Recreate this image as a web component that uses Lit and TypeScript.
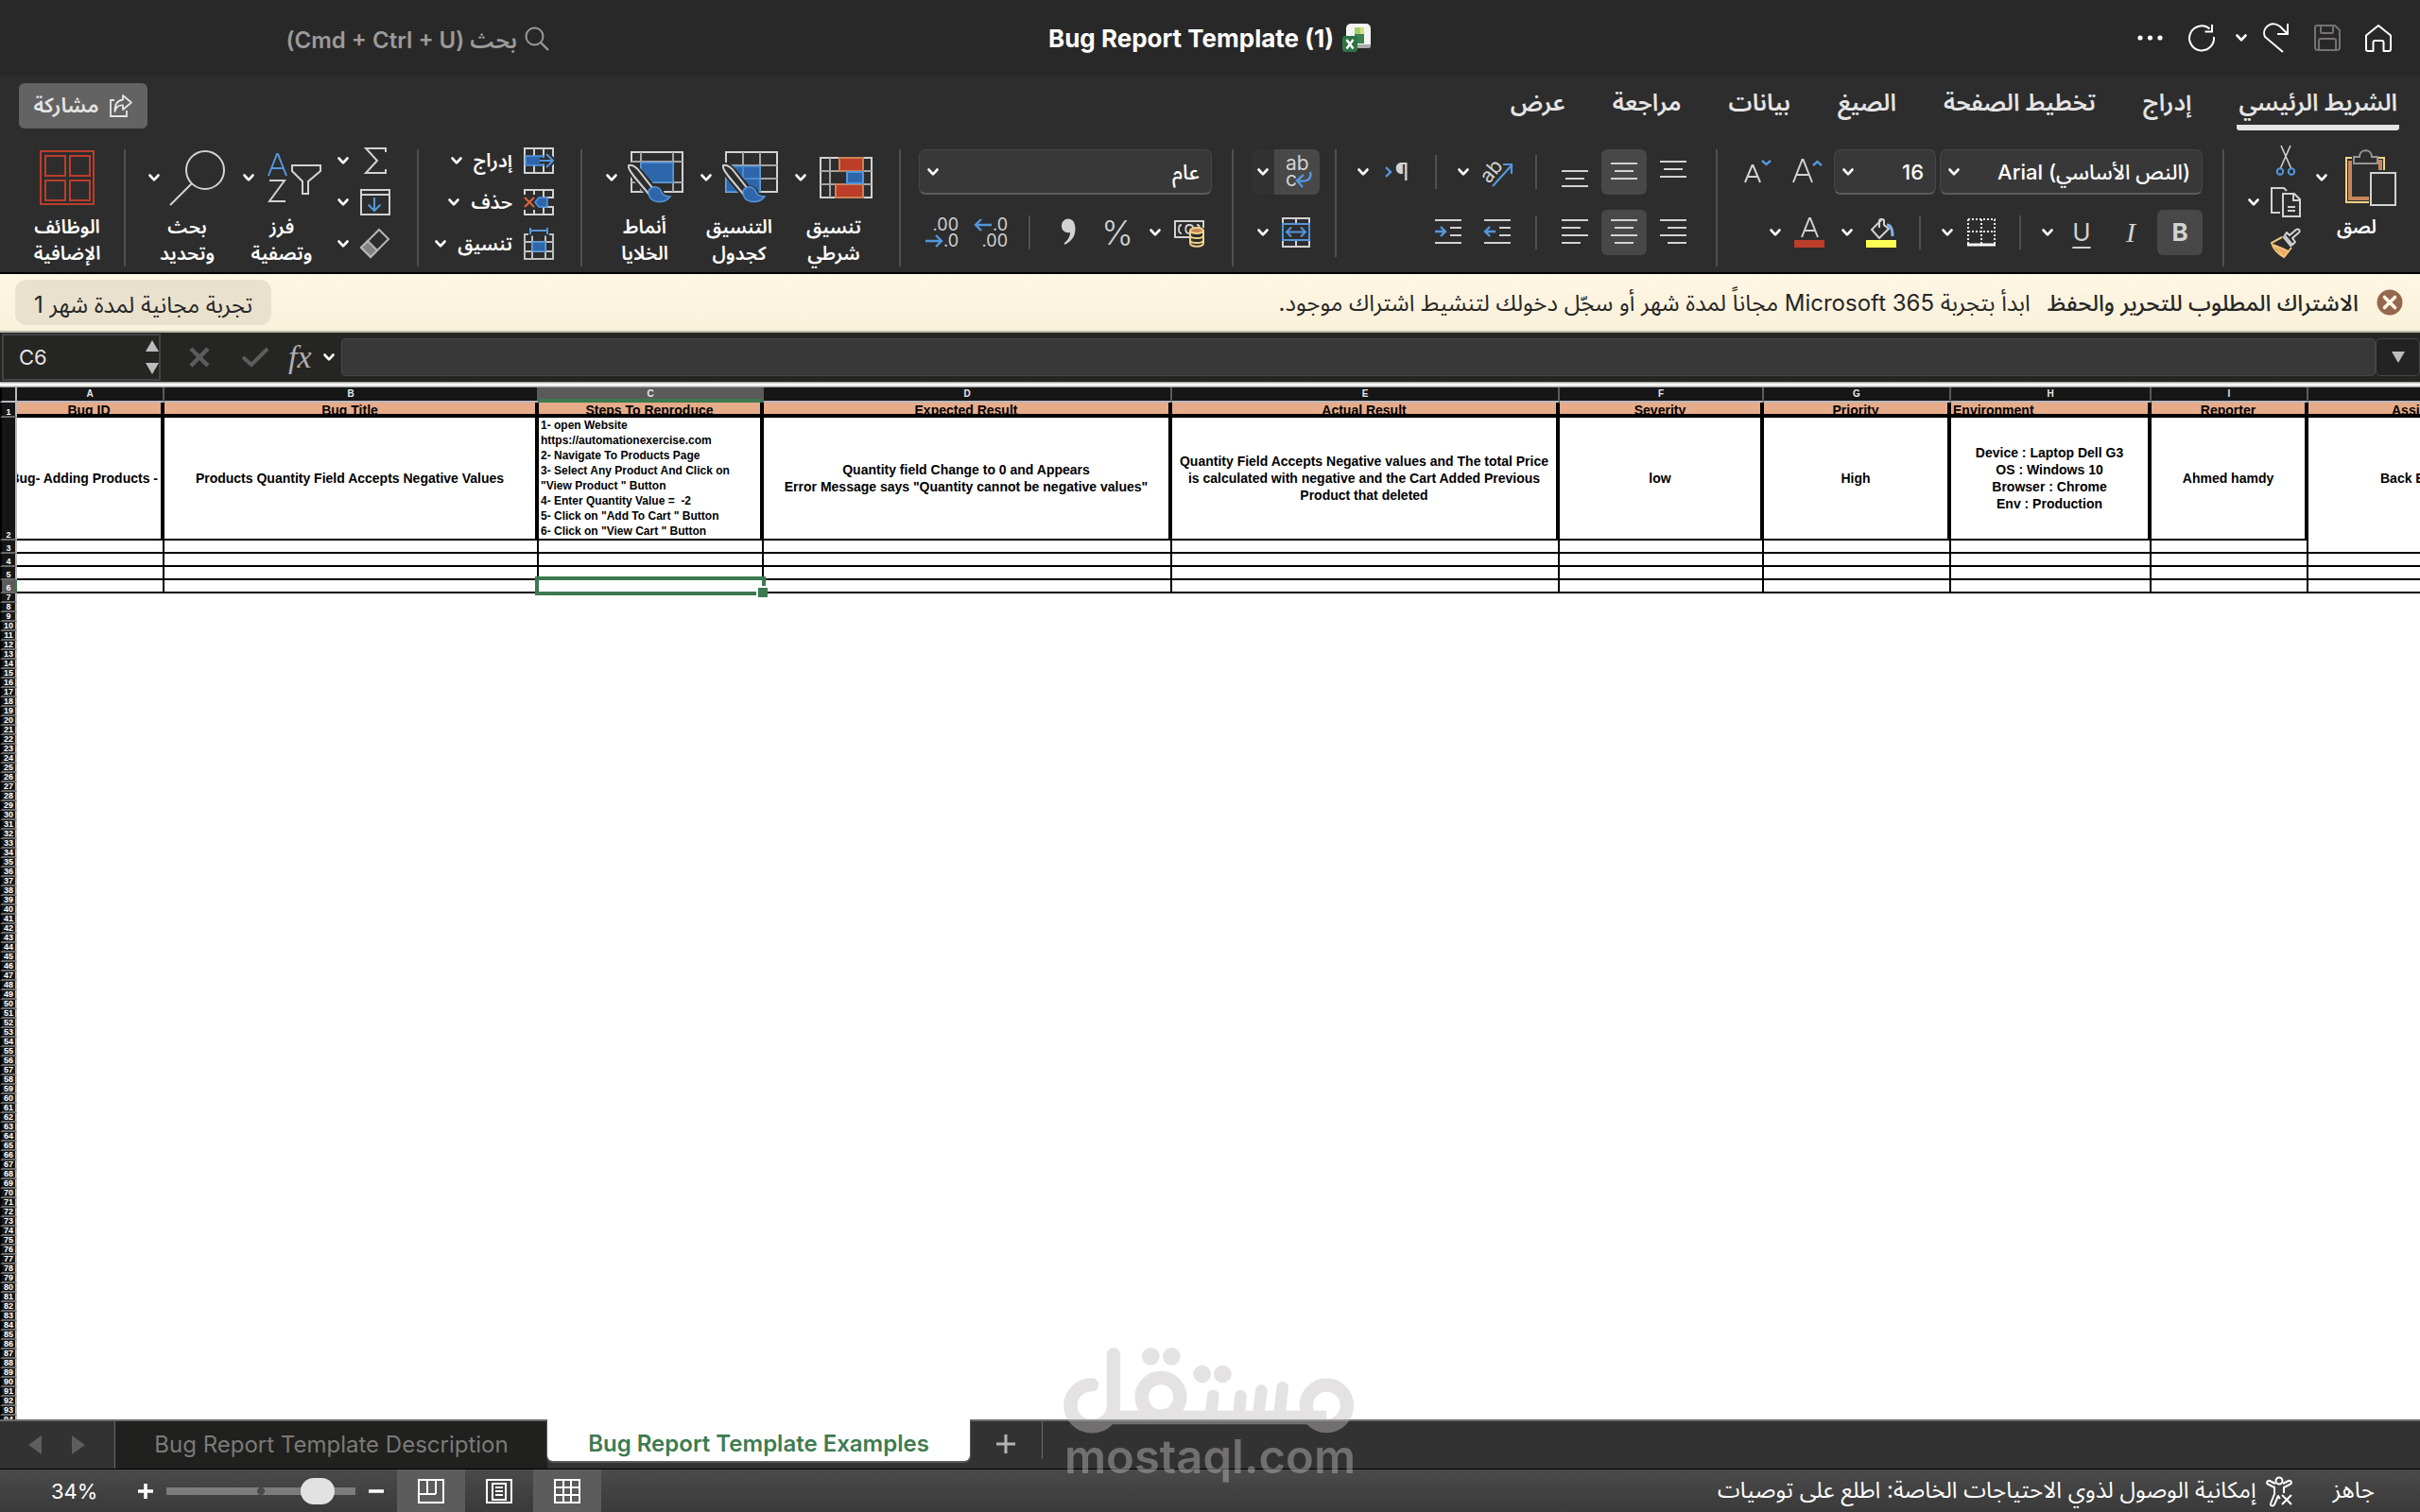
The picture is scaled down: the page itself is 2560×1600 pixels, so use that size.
import { LitElement, html, css, svg, nothing, TemplateResult } from "lit";
import { customElement, state } from "lit/decorators.js";
import { classMap } from "lit/directives/class-map.js";
import { styleMap } from "lit/directives/style-map.js";

const chevron = html`<svg class="chev" viewBox="0 0 12 8" width="12" height="8" aria-hidden="true">
  <path d="M1.5 1.5 6 6.3 10.5 1.5" fill="none" stroke="#fff" stroke-width="2.6" stroke-linecap="round" stroke-linejoin="round" />
</svg>`;

const pic = (w: number, h: number, body: unknown) =>
  html`<svg class="pic" viewBox="0 0 ${w} ${h}" width=${w} height=${h} fill="none" stroke="#d2d2d2" stroke-width="2" aria-hidden="true">${body}</svg>`;

const lines = (rows: number[][]) =>
  pic(32, 32, rows.map(([x1, x2, y]) => svg`<path d="M${x1} ${y}H${x2}" />`));

const icons = {
  home: pic(32, 32, svg`<g stroke="#fff"><path d="M3 13.5 16 3 29 13.5V28a2 2 0 0 1-2 2h-5.500v-9a2 2 0 0 0-2-2h-7a2 2 0 0 0-2 2v9H5a2 2 0 0 1-2-2Z" stroke-linejoin="round" /></g>`),
  save: pic(32, 32, svg`<g stroke="#757170"><path d="M5 3h19l5 5v18a3 3 0 0 1-3 3H6a3 3 0 0 1-3-3V5a2 2 0 0 1 2-2Z M9 3v7a1 1 0 0 0 1 1h11a1 1 0 0 0 1-1V3 M7 29V19a2 2 0 0 1 2-2h14a2 2 0 0 1 2 2v10" /></g>`),
  redo: pic(32, 36, svg`<g stroke="#fff"><path d="M28 3v11H17 M28 14 20 6C10-1 0 8 4 17L23 33" stroke-linejoin="miter" /></g>`),
  refresh: pic(32, 32, svg`<g stroke="#fff"><path d="M24.500 6.500A13 13 0 1 0 29 15 M27 2v7.500h-7.500" /></g>`),
  dots: pic(32, 32, svg`<g fill="#fff" stroke="none"><circle cx="5" cy="16" r="2.600" /><circle cx="15.500" cy="16" r="2.600" /><circle cx="26" cy="16" r="2.600" /></g>`),
  search: pic(26, 28, svg`<g stroke="#9c9a99"><circle cx="10.500" cy="10.500" r="9" /><path d="M17 17 25 25" stroke-width="2.400" /></g>`),
  workbook: pic(32, 32, svg`<g stroke="none"><rect x="5" y="1" width="26" height="26" rx="5" fill="#f4f4f4" /><rect x="5" y="23" width="26" height="4" rx="2" fill="#a9a9a9" />
    <rect x="14" y="5" width="10" height="17" fill="#3e7f50" /><rect x="14" y="5" width="6" height="7" fill="#9fce6a" /><rect x="20" y="5" width="4" height="7" fill="#d8dd7c" />
    <rect x="1" y="14" width="16" height="17" rx="3" fill="#2f7445" /><path d="m5.500 18 7 9.500m0-9.500-7 9.500" stroke="#fff" stroke-width="2.400" /></g>`),
  share: pic(26, 26, svg`<g stroke="#e4e4e4" stroke-width="1.800"><path d="M6 7H2v17h17v-6" /><path d="M15 2 24 9.500 15 17v-4.500C10 12 8 14 6.500 19 6.500 11 9 7 15 6.500Z" stroke-linejoin="round" /></g>`),
  paste: pic(56, 60, svg`<path d="M8 9H2v47h24" stroke="#f2d488" stroke-width="2" /><path d="M6 12v40h20" stroke="#c9855a" stroke-width="4" /><path d="M36 9h6v13" stroke="#f2d488" /><path d="M34 13h4v9" stroke="#c9855a" stroke-width="4" />
    <path d="M10 15V8h6c0-9 13-9 13 0h6v7Z" stroke="#959595" fill="#2d2d2d" /><rect x="28" y="25" width="26" height="34" fill="#2d2d2d" />`),
  cut: pic(32, 32, svg`<path d="M11 0 22 25M21 0 10 25" stroke-width="1.600" /><g stroke="#5496dc"><circle cx="10" cy="27.500" r="3.200" /><circle cx="22" cy="27.500" r="3.200" /></g>`),
  copy: pic(32, 32, svg`<path d="M10 27H1V1h13l3 3" /><path d="M13 7h12l6 6v18H13Z M24 7v7h7 M18 21h8M18 25h8" />`),
  brush: pic(32, 32, svg`<path d="M13 8 22 19 M15 7l8 10 3-3-3-4 7-6a2 2 0 0 0-3-3l-7 6-3-3Z" stroke-linejoin="round" /><path d="M12 9 1 15c2 7 6 11 13 15l8-10" stroke="#f2c878" /><path d="m3 17 10 4 6 3-5 6Z" fill="#f2a56a" stroke="#f2c878" stroke-width="1.500" />`),
  grow: pic(32, 32, svg`<path d="M1 27 10.500 3h1L21 27M5 19h12" /><path d="m22 9 4.500-4L31 9" stroke="#5496dc" stroke-width="2.400" />`),
  shrink: pic(32, 32, svg`<path d="M2 27 9.500 9h1L18 27M5 21h10" /><path d="m20 4 4.500 4L29 4" stroke="#5496dc" stroke-width="2.400" />`),
  borders: pic(32, 32, svg`<path d="M2 2h29M2 2v26M30 2v26M16 2v26M2 15h29" stroke-dasharray="2 2" stroke="#e8e8e8" /><path d="M1 29h30" stroke="#fff" stroke-width="3" />`),
  fill: pic(32, 34, svg`<path d="M17 3 6 14l8 9 10-10-5-4V4a3 3 0 0 0-5 0v8" /><path d="M22 9c4 0 6 3 6 12" stroke="#7cb2e8" stroke-width="3" /><rect x="0" y="25" width="32" height="8" fill="#ffff54" stroke="none" />`),
  fontColor: pic(32, 34, svg`<path d="M8 22 16 2h1l8 20M11 15h11" /><rect x="0" y="25" width="32" height="8" fill="#bb3d2a" stroke="none" />`),
  top: lines([[2, 30, 5], [6, 26, 13], [2, 30, 21]]),
  middle: lines([[2, 30, 7], [6, 26, 15], [2, 30, 23]]),
  bottom: lines([[2, 30, 15], [6, 26, 23], [2, 30, 31]]),
  right: lines([[2, 30, 3], [10, 30, 11], [2, 30, 19], [10, 30, 27]]),
  center: lines([[2, 30, 3], [6, 26, 11], [2, 30, 19], [6, 26, 27]]),
  left: lines([[2, 30, 3], [2, 22, 11], [2, 30, 19], [2, 22, 27]]),
  indentMore: pic(32, 32, svg`<path d="M2 3h28M18 11h12M18 19h12M2 27h28" /><path d="M14 15H3m5-5-5 5 5 5" stroke="#5496dc" stroke-width="2.400" />`),
  indentLess: pic(32, 32, svg`<path d="M2 3h28M18 11h12M18 19h12M2 27h28" /><path d="M2 15h11m-5-5 5 5-5 5" stroke="#5496dc" stroke-width="2.400" />`),
  merge: pic(32, 32, svg`<path d="M1 1h28v30H1ZM15 1v30" /><rect x="1" y="7" width="28" height="17" fill="#2d2d2d" stroke="#5496dc" /><path d="M5 15.500h20m-15-5-5 5 5 5m10-10 5 5-5 5" stroke="#5496dc" />`),
  comma: pic(32, 32, svg`<path d="M9 9a7 7 0 0 1 14-1c2 9-2 17-11 21v-2c4-3 6-7 6-11-5 1-9-2-9-7Z" fill="#d2d2d2" stroke="none" />`),
  currency: pic(32, 30, svg`<path d="M17 20H1V3h30v7" /><path d="M8 7c-4 0-4 9 0 9M16 16c-5 0-5-9 0-9 2 0 4 1 4 3M24 7c2 0 3 1 3 3" stroke-width="1.800" /><path d="M17 13v13c0 5 14 5 14 0V13" fill="#2d2d2d" stroke="#f2d488" /><ellipse cx="24" cy="13" rx="7" ry="3" fill="#c9855a" stroke="#f2d488" /><path d="M17 18c0 4 14 4 14 0M17 23c0 4 14 4 14 0" stroke="#f2d488" />`),
  condFormat: pic(56, 44, svg`<rect x="1" y="1" width="54" height="42" /><path d="M11 1v42M46 1v42M1 15h54M1 29h54" stroke="#a5a5a5" /><rect x="21" y="1" width="25" height="14" fill="#bb3d2a" stroke="#d08052" /><rect x="17" y="29" width="29" height="14" fill="#bb3d2a" stroke="#d08052" /><rect x="29" y="16" width="17" height="12" fill="#2e66ab" stroke="#5496dc" />`),
  sigma: pic(32, 28, svg`<path d="M27 5V1H6l12 13L6 27h21v-4" />`),
  fillDown: pic(32, 28, svg`<path d="M1 1h30v26H1ZM1 6h30" /><path d="M15 9v14m-6.500-6.500L15 23l6.500-6.500" stroke="#5496dc" />`),
  eraser: pic(32, 32, svg`<path d="M20 1 30 11 11 30 1 20Z" stroke="#b6b5b9" /><path d="M8 13 18 23 11 30 1 20Z" fill="#858183" stroke="#b6b5b9" />`),
  sort: pic(56, 56, svg`<path d="M1 26 10 3h1l9 23M4 18h13" stroke="#5496dc" /><path d="M2 31h16L2 53h17" /><path d="M26 15h30v6L43 32v13h-6V32L26 21Z" />`),
  find: pic(60, 60, svg`<circle cx="38" cy="22" r="20" /><path d="M24 36 1 59" />`),
  addins: pic(60, 60, svg`<g stroke="#bb3d2a"><rect x="2" y="2" width="56" height="56" /><rect x="7" y="7" width="21" height="21" /><rect x="33" y="7" width="21" height="21" /><rect x="7" y="33" width="21" height="21" /><rect x="33" y="33" width="21" height="21" /></g>`),
  insert: pic(32, 28, svg`<path d="M1 1h30v26H1ZM11 1v26M21 1v26" /><rect x="2" y="9" width="19" height="10" fill="#2e66ab" stroke="#5496dc" stroke-width="1.500" /><path d="M17 14h14m-7-7 7 7-7 7" stroke="#2d2d2d" stroke-width="6" /><path d="M17 14h14m-7-7 7 7-7 7" stroke="#5496dc" />`),
  remove: pic(32, 28, svg`<path d="M1 6V1h30v8H20M1 22v5h30v-8H20M11 1v5M21 1v8M11 22v5M21 19v8" /><path d="M12 14l4-5h9v10h-9Z" fill="#2e66ab" stroke="#5496dc" stroke-width="1.500" /><path d="m1 9 10 10M11 9 1 19" stroke="#e0643a" />`),
  format: pic(32, 34, svg`<path d="M1 7h30v26H1ZM9 7v26M23 7v26M1 15h30M1 25h30" stroke="#c0c0c0" /><rect x="9" y="15" width="14" height="10" fill="#2e66ab" stroke="#5496dc" stroke-width="1.500" /><path d="M5 5h22" stroke="#2d2d2d" stroke-width="7" /><path d="M7 0v7M25 0v7M7 3h18" stroke="#5496dc" />`),
  access: pic(32, 32, svg`<g stroke="#fff" stroke-linejoin="round"><circle cx="15" cy="5" r="3.500" /><path d="M11 8 5 5c-3-1-4 3-1 4l6 3v7L6 29c-1 3 3 3 4 1l4-9 2 3M19 8l6-3c3-1 4 3 1 4l-6 3v6" /><path d="m18 20 10 10M28 20 18 30" /></g>`),
};

const stylePaint = svg`<path d="M2 15c4-1 8 2 12 7l14 17c6 0 9 4 10 9l8 2c-8 6-22 7-24-6L8 27C4 22 1 18 2 15Z" fill="#2d2d2d" stroke="#2d2d2d" stroke-width="6" />
  <path d="M2 15c4-1 9 3 12 7l14 18-5 5L8 27C4 22 1 18 2 15Z" fill="#2d2d2d" stroke-width="2" />
  <path d="M23 44c0-6 7-8 12-4 3 3 1 8 11 8-6 8-22 8-23-4Z" fill="#2e66ab" stroke="#5496dc" stroke-width="1.500" />`;

const tableStyle = pic(60, 56, svg`<rect x="5" y="1" width="54" height="42" /><path d="M23 1v42M41 1v42M5 15h54M5 29h54" stroke="#a5a5a5" /><path d="M5 16h36v27H5Z" fill="#2e66ab" stroke="#5496dc" stroke-width="1.500" /><path d="M23 15v28M5 29h36" stroke="#5496dc" stroke-width="1.500" />${stylePaint}`);
const cellStyle = pic(60, 56, svg`<rect x="5" y="1" width="54" height="42" /><path d="M15 1v42M49 1v42M5 11h54M5 33h54" stroke="#a5a5a5" /><rect x="15" y="12" width="34" height="21" fill="#2e66ab" stroke="#5496dc" stroke-width="1.500" />${stylePaint}`);

interface Column { letter: string; width: number; title: string; lines: string[]; kind?: string; }

const columns: Column[] = [
  { letter: "A", width: 156, title: "Bug ID", lines: ["Bug- Adding Products -"], kind: "end" },
  { letter: "B", width: 396, title: "Bug Title", lines: ["Products Quantity Field Accepts Negative Values"] },
  { letter: "C", width: 238, title: "Steps To Reproduce", kind: "steps", lines: ["1- open Website", "https://automationexercise.com", "2- Navigate To Products Page", "3- Select Any Product And Click on", "\"View Product \" Button", "4- Enter Quantity Value =  -2", "5- Click on \"Add To Cart \" Button", "6- Click on \"View Cart \" Button"] },
  { letter: "D", width: 432, title: "Expected Result", lines: ["Quantity field Change to 0 and Appears", "Error Message says \"Quantity cannot be negative values\""] },
  { letter: "E", width: 410, title: "Actual Result", lines: ["Quantity Field Accepts Negative values and The total Price", "is calculated with negative and the Cart Added Previous", "Product that deleted"] },
  { letter: "F", width: 216, title: "Severity", lines: ["low"] },
  { letter: "G", width: 198, title: "Priority", lines: ["High"] },
  { letter: "H", width: 212, title: "Environment", kind: "env", lines: ["Device : Laptop Dell G3", "OS : Windows 10", "Browser : Chrome", "Env : Production"] },
  { letter: "I", width: 166, title: "Reporter", lines: ["Ahmed hamdy"] },
  { letter: "J", width: 250, title: "Assignee", lines: ["Back End"], kind: "open" },
];

const tabs = ["الشريط الرئيسي", "إدراج", "تخطيط الصفحة", "الصيغ", "بيانات", "مراجعة", "عرض"];

@customElement("app-root")
export class AppRoot extends LitElement {
  @state() private zoom = 34;

  static styles = css`
    :host { display: block; }
    * { box-sizing: border-box; }
    button, input, select { font: inherit; color: inherit; margin: 0; padding: 0; border: 0; background: none; }
    svg { display: block; flex: none; direction: ltr; overflow: visible; }
    .app { position: relative; display: flex; flex-direction: column; height: 100vh; overflow: hidden; background: #2d2d2d; color: #fff;
      font-family: Inter, "Noto Sans Arabic", "DejaVu Sans", sans-serif; font-size: 22px; }

    .title { display: grid; grid-template-columns: 1fr auto 1fr; align-items: center; height: 80px; background: #282828; flex: none; }
    .search { display: flex; align-items: center; gap: 8px; padding: 4px 0 0 280px; color: #9c9a99; font-size: 24px; font-weight: 600; }
    .search input { width: 267px; outline: none; }
    .search input::placeholder { color: #9c9a99; opacity: 1; }
    .doc { margin: 0; display: flex; align-items: center; gap: 8px; font-size: 26px; font-weight: 700; }
    .quick { display: flex; align-items: center; justify-content: flex-end; padding-right: 28px; gap: 22px; }
    .quick button { display: flex; }
    .quick .chev { margin: 0 -7px 0 -2px; }

    .tabs { display: flex; align-items: center; height: 64px; padding: 0 22px 0 20px; flex: none; }
    .tabs nav { display: flex; gap: 46px; height: 56px; }
    .tabs a { color: #e4e4e4; text-decoration: none; font-size: 25px; font-weight: 600; line-height: 48px; height: 54px; padding: 0 2px; white-space: nowrap; }
    .tabs a.on { border-bottom: 6px solid #e4e4e4; border-radius: 3px; }
    .share { margin-inline-start: auto; display: flex; align-items: center; gap: 10px; width: 136px; height: 48px; justify-content: center; border-radius: 6px; background: #636363; color: #e4e4e4; font-weight: 600; }

    .ribbon { display: flex; align-items: flex-start; height: 144px; padding-top: 14px; flex: none; }
    .group { display: flex; height: 124px; border-left: 2px solid #505050; padding: 0 21px 0 19px; }
    .group.clip { padding: 0 24px 0 25px; gap: 16px; }
    .group.align { padding-left: 22px; height: 114px; }
    .group.wrap { padding-right: 16px; }
    .group.styles { padding: 0 28px 0 25px; gap: 18px; }
    .group.cells { padding: 0 28px 0 23px; }
    .group.edit { padding: 0 28px 0 24px; gap: 18px; }
    .group.last { border: 0; padding: 0 28px 0 0; }
    .stack { display: flex; flex-direction: column; gap: 16px; }
    .row { display: flex; align-items: center; gap: 4px; height: 48px; }
    .slot { display: flex; align-items: center; justify-content: center; width: 48px; height: 48px; border-radius: 6px; color: #d2d2d2; flex: none; }
    .slot.on, .seg.on { background: #484848; }
    .split { display: flex; align-items: center; gap: 14px; flex: none; height: 36px; }
    .split .pic, .split .glyph { width: 32px; }
    .split.first { margin-right: 8px; }
    .vsep { width: 2px; height: 36px; background: #505050; flex: none; }
    .slot + .vsep, .vsep + .slot { margin-right: 12px; }
    .split + .vsep { margin-right: 18px; }
    .vsep + .split { margin-right: 20px; }
    .slot + .split { margin-right: 8px; }
    .split + .split { margin-right: 14px; }
    .split + .slot { margin-right: 6px; }
    .split.tight { gap: 12px; height: 24px; margin: 0; }
    .glyph { color: #d2d2d2; text-align: center; line-height: 1; }
    .bold { font-family: Inter; font-weight: 700; font-size: 26px; }
    .italic { font-family: "Liberation Serif"; font-style: italic; font-size: 30px; }
    .under { font-size: 26px; text-decoration: underline; text-underline-offset: 6px; text-decoration-thickness: 2px; }
    .pct { font-size: 36px; font-weight: 300; }
    .digits { display: block; direction: ltr; font-size: 18px; line-height: 17px; color: #d2d2d2; }
    .digits span { display: flex; align-items: center; justify-content: flex-end; }
    .pilcrow { font-size: 25px; direction: ltr; display: flex; align-items: center; justify-content: center; gap: 2px; color: #d2d2d2; }
    .combo { display: grid; align-items: center; height: 48px; background: #383838; border: 1px solid #464646; border-bottom: 2px solid #5c5c5c; border-radius: 7px; font-weight: 500; }
    .combo > * { grid-area: 1 / 1; }
    .combo select { appearance: none; width: 100%; height: 44px; line-height: 44px; padding: 0 12px; outline: none; }
    .combo select option { color: #000; }
    .combo .chev { justify-self: end; margin-left: 8px; pointer-events: none; }
    .combo.face { width: 278px; } .combo.size { width: 108px; } .combo.num { width: 310px; }
    .wrapbtn { display: flex; width: 72px; height: 48px; border-radius: 6px; overflow: hidden; background: #323232; align-items: center; }
    .seg { width: 48px; height: 48px; display: grid; place-items: center; }
    .wrapbtn .chev { margin: 0 6px; }
    .big { display: flex; flex-direction: column; align-items: center; gap: 8px; color: #fff; font-weight: 600; font-size: 20px; line-height: 28px; white-space: nowrap; height: 124px; width: 82px; }
    .big .top { display: flex; align-items: center; gap: 14px; height: 60px; }
    .big .top .pic { margin: 0 0 0 -4px; }
    .big .top .pic[width="56"] { margin: 0; }
    .big.paste { width: 86px; } .big.paste .top { gap: 18px; }
    .big.one { width: 64px; }
    .big.one .top .pic { margin: 0; }
    .col { display: flex; flex-direction: column; gap: 20px; }
    .cellbtn { display: flex; align-items: center; gap: 12px; height: 24px; font-size: 20px; font-weight: 600; line-height: 24px; }
    .cells .col { width: 120px; }

    .notice { display: flex; align-items: center; height: 64px; padding: 0 18px 0 16px; border-top: 2px solid #000; border-bottom: 2px solid #b9b9aa; background: linear-gradient(#fff6e4, #f9f1da); color: #262626; font-size: 24px; flex: none; white-space: nowrap; }
    .notice strong { font-weight: 500; margin-right: 19px; margin-left: 18px; }
    .notice strong, .notice span, .trial { padding-top: 2px; }
    .trial { margin-inline-start: auto; height: 48px; padding: 2px 20px 0; border-radius: 12px; background: #e9e1cd; }

    .formula { display: flex; align-items: center; height: 52px; background: #252523; padding-left: 2px; flex: none; direction: ltr; }
    .namebox { display: flex; align-items: center; width: 168px; height: 50px; border: 2px solid #444; padding: 0 0 0 16px; }
    .namebox input { flex: 1; min-width: 0; font-size: 22px; color: #e4e4e4; outline: none; }
    .ftools { display: flex; align-items: center; gap: 32px; padding-left: 29px; }
    .ftools button { display: flex; align-items: center; gap: 12px; }
    .ftools .func { margin-left: -12px; }
    .fx { font: italic 34px/36px "Liberation Serif"; color: #b0b0b0; }
    .finput { flex: 1; height: 40px; margin-left: 7px; background: #383838; border: 1px solid #464646; border-radius: 4px; outline: none; padding: 0 10px; }
    .fdrop { width: 47px; height: 40px; border: 1px solid #464646; background: #232323; border-radius: 5px; display: grid; place-items: center; }
    .rule { height: 6px; background: linear-gradient(#8d8d89, #fff 40%, #fff 60%, #8a8a8a); flex: none; }

    .sheet { flex: 1; min-height: 0; overflow: hidden; background: #fff; direction: ltr; }
    table { width: 100%; border-collapse: separate; border-spacing: 0; table-layout: fixed; color: #000; font: bold 14px/18px "Liberation Sans", sans-serif; }
    th, td { padding: 0; }
    thead th { height: 16px; background: #161616; color: #e8e8e8; font-size: 10px; line-height: 14px; font-weight: 700; border-right: 2px solid #5a5a5a; border-bottom: 2px solid #b9b9bf; }
    thead th.sel { background: #5a5a5a; border-bottom-color: #3b7a4e; box-shadow: inset 0 -2px #3b7a4e; }
    .rh { background: #161616; color: #fff; font: 700 9px/8px "Liberation Sans", sans-serif; vertical-align: bottom; border-left: 2px solid #000; border-right: 2px solid #b9b9bf; border-bottom: 2px solid #6a6a6a; overflow: hidden; }
    thead .rh { border-bottom: 2px solid #b9b9bf; border-right: 2px solid #b9b9bf; }
    .rh.sel { background: #5a5a5a; border-right-color: #3b7a4e; }
    .rh div { height: 8px; }
    .r1 td { background: #e6ab88; border-bottom: 4px solid #000; border-right: 4px solid #000; text-align: center; }
    .r1 div { height: 12px; line-height: 16px; overflow: hidden; }
    .r1 td.env { text-align: left; padding-left: 2px; }
    .r1 td.open { text-align: left; padding-left: 88px; }
    .r2 td { border-bottom: 2px solid #000; border-right: 4px solid #000; }
    .r2 td.open { border-bottom-color: transparent; }
    .r2 .cell { display: flex; flex-direction: column; justify-content: center; align-items: center; height: 128px; overflow: hidden; white-space: pre; }
    .r2 .end .cell { align-items: flex-end; padding-right: 3px; }
    .r2 .steps .cell { align-items: flex-start; font-size: 12px; line-height: 16px; padding: 0 0 0 2px; }
    .r2 .open .cell { align-items: flex-start; padding-left: 76px; }
    .rn td { height: 14px; border-bottom: 2px solid #000; border-right: 2px solid #000; }
    .blank .rh { height: 10px; }
    .active { position: relative; }
    .ring { position: absolute; inset: -4px; border: 4px solid #3b7a4e; }
    .ring i { position: absolute; right: -6px; bottom: -6px; width: 12px; height: 12px; background: #3b7a4e; border: 2px solid #fff; border-right: 0; border-bottom: 0; }

    .books { display: flex; align-items: flex-start; height: 52px; background: #323232; border-top: 2px solid #6a6a6a; flex: none; direction: ltr; }
    .arrows { display: flex; gap: 32px; padding-left: 30px; width: 121px; height: 50px; align-items: center; }
    .books a { text-decoration: none; font-size: 24px; line-height: 50px; height: 50px; width: 458px; text-align: center; white-space: nowrap; background: #20201e; color: #7c7a78; border-left: 1px solid #6a6a6a; font-weight: 400; }
    .books a.on { background: #fff; color: #3d7b50; width: 447px; height: 44px; margin-top: -2px; line-height: 52px; font-weight: 600; border: 0; border-radius: 0 0 6px 6px; box-shadow: 0 1px 1px 1px #5a5a5a; clip-path: inset(0 -2px -3px -2px); }
    .add { width: 77px; height: 40px; display: grid; place-items: center; border-right: 1px solid #6a6a6a; padding-top: 8px; }

    .status { display: flex; align-items: center; height: 46px; border-top: 1px solid #000; background: linear-gradient(#4a4a4a, #3a3a3a); flex: none; direction: ltr; }
    .pctv { width: 91px; padding-left: 54px; white-space: nowrap; }
    .zoom { display: flex; align-items: center; gap: 14px; margin-left: 55px; margin-right: 14px; }
    .zoom input { appearance: none; width: 200px; height: 28px; direction: rtl; background: radial-gradient(circle at 50% 50%, #4a4a4a 4px, transparent 4px), linear-gradient(#7c7c7c, #7c7c7c) center / 100% 8px no-repeat; }
    .zoom input::-webkit-slider-thumb { appearance: none; width: 36px; height: 28px; border-radius: 14px; background: #e2e2e2; }
    .view { width: 72px; height: 45px; display: grid; place-items: center; }
    .view.on { background: #5c5c5c; }
    .state { margin-left: auto; direction: rtl; display: flex; align-items: center; padding-right: 48px; white-space: nowrap; font-size: 24px; }
    .state span { margin-left: 40px; }
    .state a { color: inherit; text-decoration: none; display: flex; align-items: center; gap: 9px; }

    .mark { position: absolute; left: 50%; bottom: 34px; transform: translateX(-50%); display: flex; flex-direction: column; align-items: center; opacity: 0.44; pointer-events: none; color: #c2bebe; direction: ltr; }
    .mark b { font: 600 49px/48px Inter, sans-serif; }
  `;

  private split(label: string, icon: unknown, extra = "") {
    return html`<button class="split ${extra}" aria-label=${label}>${icon}${chevron}</button>`;
  }
  private slotBtn(label: string, icon: unknown, on = false) {
    return html`<button class=${classMap({ slot: true, on })} aria-label=${label}>${icon}</button>`;
  }
  private big(icon: unknown, label: TemplateResult, cls = "", drop = true) {
    return html`<button class="big ${cls}"><span class="top">${icon}${drop ? chevron : nothing}</span><span>${label}</span></button>`;
  }

  private ribbon() {
    const sep = html`<span class="vsep"></span>`;
    const arrow = (d: string) => html`<svg width="20" height="14" viewBox="0 0 20 14" fill="none" stroke="#5496dc" stroke-width="2.400" aria-hidden="true"><path d=${d} /></svg>`;
    return html`<section class="ribbon">
      <div class="group clip">
        ${this.big(icons.paste, html`لصق`, "paste")}
        <div class="col">
          <button class="split tight" aria-label="قص">${icons.cut}</button>
          ${this.split("نسخ", icons.copy, "tight")}
          <button class="split tight" aria-label="نسخ التنسيق">${icons.brush}</button>
        </div>
      </div>
      <div class="group"><div class="stack">
        <div class="row">
          <label class="combo face"><select aria-label="الخط"><option>(النص الأساسي) Arial</option></select>${chevron}</label>
          <label class="combo size"><select aria-label="حجم الخط"><option>16</option></select>${chevron}</label>
          ${this.slotBtn("تكبير الخط", icons.grow)}${this.slotBtn("تصغير الخط", icons.shrink)}
        </div>
        <div class="row">
          ${this.slotBtn("غامق", html`<span class="glyph bold">B</span>`, true)}
          ${this.slotBtn("مائل", html`<span class="glyph italic">I</span>`)}
          ${this.split("تسطير", html`<span class="glyph under">U</span>`)}${sep}
          ${this.split("حدود", icons.borders)}${sep}
          ${this.split("لون التعبئة", icons.fill)}${this.split("لون الخط", icons.fontColor)}
        </div>
      </div></div>
      <div class="group align"><div class="stack">
        <div class="row">
          ${this.slotBtn("محاذاة لأعلى", icons.top)}${this.slotBtn("محاذاة للوسط", icons.middle, true)}${this.slotBtn("محاذاة لأسفل", icons.bottom)}${sep}
          ${this.split("الاتجاه", html`<svg class="pic" width="32" height="32" viewBox="0 0 32 32" aria-hidden="true"><text x="-2" y="22" transform="rotate(-50 10 16)" fill="#d2d2d2" font-size="21" font-family="Inter">ab</text><path d="M11 31 31 9M22 8h9v10" fill="none" stroke="#5496dc" stroke-width="2.200" /></svg>`)}${sep}
          ${this.split("اتجاه النص", html`<span class="glyph pilcrow"><svg width="8" height="14" viewBox="0 0 8 14" fill="none" stroke="#5496dc" stroke-width="2.400" aria-hidden="true"><path d="m1 2 5 5-5 5" /></svg>¶</span>`)}
        </div>
        <div class="row">
          ${this.slotBtn("يمين", icons.right)}${this.slotBtn("توسيط", icons.center, true)}${this.slotBtn("يسار", icons.left)}${sep}
          ${this.slotBtn("إنقاص المسافة", icons.indentMore)}${this.slotBtn("زيادة المسافة", icons.indentLess)}
        </div>
      </div></div>
      <div class="group wrap"><div class="stack">
        <button class="wrapbtn" aria-label="التفاف النص"><span class="seg on"><svg width="32" height="36" viewBox="0 0 32 36" aria-hidden="true"><g fill="#d2d2d2" font-size="21" font-family="Inter"><text x="4" y="16">ab</text><text x="4" y="33">c</text></g><path d="M30 18c2 8-4 11-13 9m6-6-7 6 6 7" fill="none" stroke="#5496dc" stroke-width="2.400" /></svg></span>${chevron}</button>
        <div class="row">${this.split("دمج وتوسيط", icons.merge, "first")}</div>
      </div></div>
      <div class="group"><div class="stack">
        <label class="combo num"><select aria-label="تنسيق الأرقام"><option>عام</option></select>${chevron}</label>
        <div class="row">
          ${this.split("عملة", icons.currency, "first")}
          ${this.slotBtn("نسبة مئوية", html`<span class="glyph pct">%</span>`)}
          ${this.slotBtn("فاصلة", icons.comma)}${sep}
          ${this.slotBtn("زيادة المنازل", html`<span class="digits"><span>${arrow("M19 7H2m6-6L2 7l6 6")}.0</span><span>.00</span></span>`)}
          ${this.slotBtn("إنقاص المنازل", html`<span class="digits"><span>.00</span><span>${arrow("M1 7h17m-6-6 6 6-6 6")}.0</span></span>`)}
        </div>
      </div></div>
      <div class="group styles">
        ${this.big(icons.condFormat, html`تنسيق<br />شرطي`)}
        ${this.big(tableStyle, html`التنسيق<br />كجدول`)}
        ${this.big(cellStyle, html`أنماط<br />الخلايا`)}
      </div>
      <div class="group cells"><div class="col">
        <button class="cellbtn">${icons.insert}إدراج${chevron}</button>
        <button class="cellbtn">${icons.remove}حذف${chevron}</button>
        <button class="cellbtn">${icons.format}تنسيق${chevron}</button>
      </div></div>
      <div class="group edit">
        <div class="col">
          ${this.split("جمع تلقائي", icons.sigma, "tight")}
          ${this.split("تعبئة", icons.fillDown, "tight")}
          ${this.split("مسح", icons.eraser, "tight")}
        </div>
        ${this.big(icons.sort, html`فرز<br />وتصفية`)}
        ${this.big(icons.find, html`بحث<br />وتحديد`)}
      </div>
      <div class="group last">${this.big(icons.addins, html`الوظائف<br />الإضافية`, "one", false)}</div>
    </section>`;
  }

  private grid() {
    const blank = Array.from({ length: 88 }, (_, i) => i + 7);
    return html`<div class="sheet"><table>
      <colgroup><col style=${styleMap({ width: "18px" })} />${columns.map((c) => html`<col style=${styleMap({ width: `${c.width}px` })} />`)}</colgroup>
      <thead><tr><th class="rh"></th>${columns.map((c) => html`<th scope="col" class=${classMap({ sel: c.letter === "C" })}>${c.letter}</th>`)}</tr></thead>
      <tbody>
        <tr class="r1"><th class="rh" scope="row"><div>1</div></th>${columns.map((c) => html`<td class=${c.kind ?? ""}><div>${c.title}</div></td>`)}</tr>
        <tr class="r2"><th class="rh" scope="row"><div>2</div></th>${columns.map((c) => html`<td class=${c.kind ?? ""}><div class="cell">${c.lines.map((l) => html`<span>${l}</span>`)}</div></td>`)}</tr>
        ${[3, 4, 5, 6].map((n) => html`<tr class="rn"><th class=${classMap({ rh: true, sel: n === 6 })} scope="row"><div>${n}</div></th>${columns.map((c) =>
          n === 6 && c.letter === "C" ? html`<td class="active"><div class="ring"><i></i></div></td>` : html`<td></td>`)}</tr>`)}
        ${blank.map((n) => html`<tr class="blank"><th class="rh" scope="row"><div>${n}</div></th></tr>`)}
      </tbody>
    </table></div>`;
  }

  render() {
    return html`<div class="app" dir="rtl" lang="ar">
      <header class="title" dir="ltr">
        <label class="search"><input type="text" dir="rtl" placeholder="بحث (Cmd + Ctrl + U)" aria-label="بحث" />${icons.search}</label>
        <h1 class="doc"><span>Bug Report Template (1)</span>${icons.workbook}</h1>
        <div class="quick">
          <button aria-label="المزيد">${icons.dots}</button>
          <button aria-label="تحديث">${icons.refresh}</button>
          <button aria-label="خيارات الإعادة">${chevron}</button>
          <button aria-label="إعادة">${icons.redo}</button>
          <button aria-label="حفظ">${icons.save}</button>
          <button aria-label="الصفحة الرئيسية">${icons.home}</button>
        </div>
      </header>
      <div class="tabs">
        <nav>${tabs.map((t, i) => html`<a href="#" class=${classMap({ on: i === 0 })}>${t}</a>`)}</nav>
        <button class="share">${icons.share}مشاركة</button>
      </div>
      ${this.ribbon()}
      <div class="notice">
        <button aria-label="إغلاق"><svg width="28" height="28" viewBox="0 0 28 28" aria-hidden="true"><circle cx="14" cy="14" r="13.500" fill="#94684f" /><path d="m8.500 8.500 11 11m0-11-11 11" stroke="#fff6e4" stroke-width="3.600" stroke-linecap="round" /></svg></button>
        <strong>الاشتراك المطلوب للتحرير والحفظ</strong>
        <span>ابدأ بتجربة Microsoft 365 مجاناً لمدة شهر أو سجّل دخولك لتنشيط اشتراك موجود.</span>
        <button class="trial">تجربة مجانية لمدة شهر 1</button>
      </div>
      <div class="formula">
        <div class="namebox"><input value="C6" aria-label="مربع الاسم" />
          <svg width="14" height="36" viewBox="0 0 14 36" fill="#bdbdbd" aria-hidden="true"><path d="M7 0l7 12H0ZM7 36l7-12H0Z" /></svg></div>
        <div class="ftools">
          <button aria-label="إلغاء"><svg width="24" height="22" viewBox="0 0 24 22" stroke="#5c5c5c" stroke-width="4.500" aria-hidden="true"><path d="m3 2 18 18M21 2 3 20" /></svg></button>
          <button aria-label="إدخال"><svg width="30" height="22" viewBox="0 0 30 22" fill="none" stroke="#5c5c5c" stroke-width="4" aria-hidden="true"><path d="m2 11 9 8L28 2" /></svg></button>
          <button class="func" aria-label="إدراج دالة"><span class="fx">fx</span>${chevron}</button>
        </div>
        <input class="finput" aria-label="شريط الصيغة" />
        <button class="fdrop" aria-label="توسيع"><svg width="14" height="12" viewBox="0 0 14 12" aria-hidden="true"><path d="M0 0h14L7 12Z" fill="#bdbdbd" /></svg></button>
      </div>
      <div class="rule"></div>
      ${this.grid()}
      <div class="books">
        <div class="arrows">
          <button aria-label="السابق"><svg width="14" height="20" viewBox="0 0 14 20" fill="#5e5e5e" aria-hidden="true"><path d="M14 0v20L0 10Z" /></svg></button>
          <button aria-label="التالي"><svg width="14" height="20" viewBox="0 0 14 20" fill="#5e5e5e" aria-hidden="true"><path d="M0 0v20l14-10Z" /></svg></button>
        </div>
        <a href="#">Bug Report Template Description</a>
        <a href="#" class="on">Bug Report Template Examples</a>
        <button class="add" aria-label="ورقة جديدة"><svg width="20" height="20" viewBox="0 0 20 20" stroke="#b5b5b5" stroke-width="3" aria-hidden="true"><path d="M10 0v20M0 10h20" /></svg></button>
      </div>
      <footer class="status">
        <output class="pctv">${this.zoom}%</output>
        <div class="zoom">
          <button aria-label="تكبير"><svg width="16" height="16" viewBox="0 0 16 16" stroke="#fff" stroke-width="3.600" aria-hidden="true"><path d="M8 0v16M0 8h16" /></svg></button>
          <input type="range" min="0" max="250" .value=${String(this.zoom)} aria-label="تكبير/تصغير" @input=${(e: Event) => (this.zoom = Number((e.target as HTMLInputElement).value))} />
          <button aria-label="تصغير"><svg width="16" height="16" viewBox="0 0 16 16" stroke="#fff" stroke-width="3.600" aria-hidden="true"><path d="M0 8h16" /></svg></button>
        </div>
        <button class="view on" aria-label="فواصل الصفحات"><svg width="28" height="26" viewBox="0 0 28 26" fill="none" stroke="#fff" stroke-width="2" aria-hidden="true"><path d="M1 1h26v24H1ZM10 1v15M19 1v15M1 16h18" /></svg></button>
        <button class="view" aria-label="تخطيط الصفحة"><svg width="28" height="26" viewBox="0 0 28 26" fill="none" stroke="#fff" stroke-width="2" aria-hidden="true"><path d="M1 1h26v24H1ZM7 5h14v17H7ZM10 9h8M10 13h8M10 17h8" /></svg></button>
        <button class="view on" aria-label="عادي"><svg width="28" height="26" viewBox="0 0 28 26" fill="none" stroke="#fff" stroke-width="2" aria-hidden="true"><path d="M1 1h26v24H1ZM10 1v24M18 1v24M1 9h26M1 17h26" /></svg></button>
        <div class="state"><span>جاهز</span><a href="#">${icons.access}إمكانية الوصول لذوي الاحتياجات الخاصة: اطلع على توصيات</a></div>
      </footer>
      <div class="mark">
        <svg width="320" height="98" viewBox="0 0 960 294" fill="none" stroke="currentColor" stroke-width="43" stroke-linecap="round" aria-hidden="true">
          <path d="M105 136A68 66 0 0 0 105 268 68 66 0 0 0 174 202V40" />
          <path d="M174 240H850" stroke-linecap="butt" />
          <circle cx="850" cy="202" r="65" /><circle cx="324" cy="175" r="61" />
          <g stroke-width="38"><path d="M490 171 483 236M577 171 572 236M643 155 633 236M710 145 700 236" /></g>
          <g fill="currentColor" stroke="none"><circle cx="292" cy="46" r="28" /><circle cx="358" cy="46" r="28" /><circle cx="455" cy="102" r="28" /><circle cx="520" cy="102" r="28" /></g>
        </svg>
        <b>mostaql.com</b>
      </div>
    </div>`;
  }
}
